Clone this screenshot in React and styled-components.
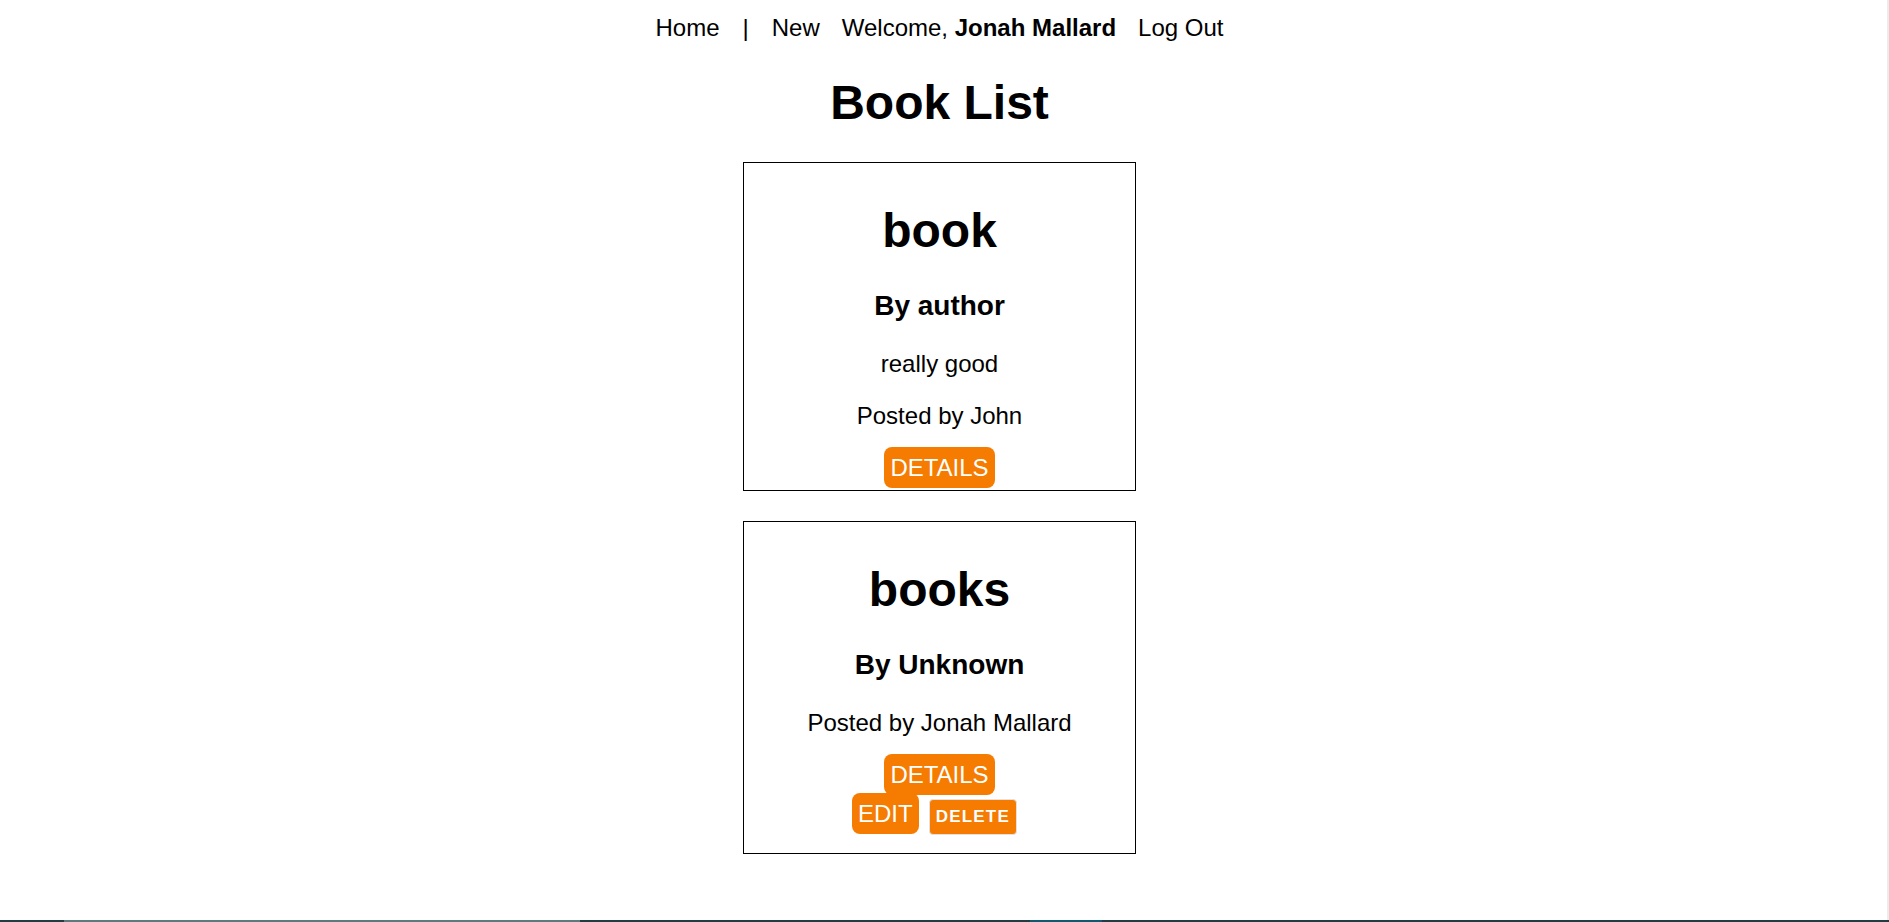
import React from 'react'
import styled, { createGlobalStyle } from 'styled-components'

const GlobalStyle = createGlobalStyle`
  html, body {
    margin: 0;
    padding: 0;
    background: #fff;
  }
  body {
    font-family: "Liberation Sans", Arial, sans-serif;
    font-size: 24px;
    color: #000;
  }
`;

const orange = '#f57c00';

const Screen = styled.div`
  display: flex;
  flex-direction: column;
  height: 100vh;
  overflow: hidden;
`;

const Viewport = styled.div`
  flex: 1;
  display: flex;
  min-height: 0;
`;

const Page = styled.main`
  flex: 1;
  padding: 14px 8px 0 0;
  text-align: center;
`;

const ScrollEdge = styled.div`
  width: 2px;
  background: #ececec;
`;

const Taskbar = styled.div`
  display: flex;
  height: 2px;
  background: #1f3d43;
`;

const TaskSegment = styled.div`
  width: ${p => p.w}px;
  flex: ${p => (p.grow ? 1 : 'none')};
  background: ${p => p.color};
`;

const Nav = styled.nav`
  display: flex;
  justify-content: center;
  align-items: baseline;
  gap: 22px;
  line-height: normal;
`;

const NavLink = styled.a`
  color: #000;
  text-decoration: none;
  cursor: pointer;
`;

const Divider = styled.span`
  margin: 0 1px;
`;

const Title = styled.h1`
  font-size: 48px;
  font-weight: bold;
  margin: 33px 0 32px;
`;

const List = styled.section`
  display: flex;
  flex-direction: column;
  align-items: center;
  gap: 30px;
`;

const Card = styled.article`
  box-sizing: border-box;
  width: 393px;
  padding: 8px;
  border: 1px solid #000;
  text-align: center;
`;

const BookTitle = styled.h1`
  font-size: 48px;
  margin: 32px 0;
`;

const Author = styled.h3`
  font-size: 28px;
  margin: 28px 0;
`;

const Text = styled.p`
  font-size: 24px;
  margin: 24px 0;
`;

const Actions = styled.div`
  line-height: normal;
`;

const LinkButton = styled.a`
  padding: 7px 6px;
  border-radius: 8px;
  background: ${orange};
  color: #fff;
  font-size: 24px;
  text-decoration: none;
  cursor: pointer;
`;

const DeleteButton = styled.button`
  display: inline-block;
  margin: 10px;
  padding: 7px 6px;
  border: 1px solid #e2e2e2;
  border-radius: 4px;
  background: ${orange};
  color: #fff;
  font-family: "Liberation Sans", Arial, sans-serif;
  font-size: 17px;
  font-weight: bold;
  letter-spacing: 1.2px;
  line-height: normal;
  cursor: pointer;
`;

const books = [
  { title: 'book', author: 'author', description: 'really good', poster: 'John', mine: false },
  { title: 'books', author: 'Unknown', description: '', poster: 'Jonah Mallard', mine: true },
]

const BookCard = ({ book }) => (
  <Card>
    <BookTitle>{book.title}</BookTitle>
    <Author>By {book.author}</Author>
    {book.description && <Text>{book.description}</Text>}
    <Text>Posted by {book.poster}</Text>
    <Actions>
      <LinkButton>DETAILS</LinkButton>
    </Actions>
    {book.mine && (
      <Actions>
        <LinkButton>EDIT</LinkButton><DeleteButton>DELETE</DeleteButton>
      </Actions>
    )}
  </Card>
)

const App = () => (
  <>
    <GlobalStyle />
    <Screen>
      <Viewport>
        <Page>
          <Nav>
            <NavLink>Home</NavLink>
            <Divider>|</Divider>
            <NavLink>New</NavLink>
            <span>Welcome, <b>Jonah Mallard</b></span>
            <NavLink>Log Out</NavLink>
          </Nav>
          <Title>Book List</Title>
          <List>
            {books.map(b => <BookCard key={b.title} book={b} />)}
          </List>
        </Page>
        <ScrollEdge />
      </Viewport>
      <Taskbar>
        <TaskSegment w={64} color="#1f3d43" />
        <TaskSegment w={516} color="#5b7b7f" />
        <TaskSegment w={450} color="#1f3d43" />
        <TaskSegment w={72} color="#0d5b73" />
        <TaskSegment grow color="#1f3d43" />
      </Taskbar>
    </Screen>
  </>
)

export default App
